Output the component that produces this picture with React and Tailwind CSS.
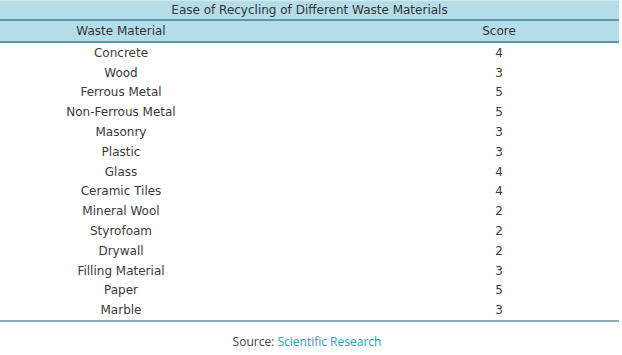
const rows = [
  ["Concrete", 4],
  ["Wood", 3],
  ["Ferrous Metal", 5],
  ["Non-Ferrous Metal", 5],
  ["Masonry", 3],
  ["Plastic", 3],
  ["Glass", 4],
  ["Ceramic Tiles", 4],
  ["Mineral Wool", 2],
  ["Styrofoam", 2],
  ["Drywall", 2],
  ["Filling Material", 3],
  ["Paper", 5],
  ["Marble", 3],
];

export default function App() {
  return (
    <div className="w-[622px] h-[355px] bg-white text-[#444]">
      <div className="w-[619px] font-['DejaVu_Sans',Verdana,sans-serif] text-[12px]">
        {/* TITLE */}
        <div className="h-[21px] bg-[#b4dde9] border-t border-[#cfe9f1] border-b-2 border-b-[#5896aa] flex items-center justify-center text-[#333]">
          Ease of Recycling of Different Waste Materials
        </div>

        {/* HEADER */}
        <div className="h-[22px] bg-[#b4dde9] border-b-2 border-b-[#5896aa] grid grid-cols-[242px_1fr_240px] items-center text-[#333]">
          <div className="text-center">Waste Material</div>
          <div></div>
          <div className="text-center">Score</div>
        </div>

        {/* BODY */}
        <div className="border-b-2 border-b-[#8fabb5]">
          {rows.map(([name, score]) => (
            <div
              key={name}
              className="h-[19.8px] grid grid-cols-[242px_1fr_240px] items-center text-[#3a3a3a]"
            >
              <div className="text-center">{name}</div>
              <div></div>
              <div className="text-center">{score}</div>
            </div>
          ))}
        </div>
      </div>

      <div className="pt-[11px] pr-[8px] text-center text-[12px] font-['Open_Sans',sans-serif] text-[#444]">
        Source: <span className="text-[#1aa3b8]">Scientific Research</span>
      </div>
    </div>
  );
}
